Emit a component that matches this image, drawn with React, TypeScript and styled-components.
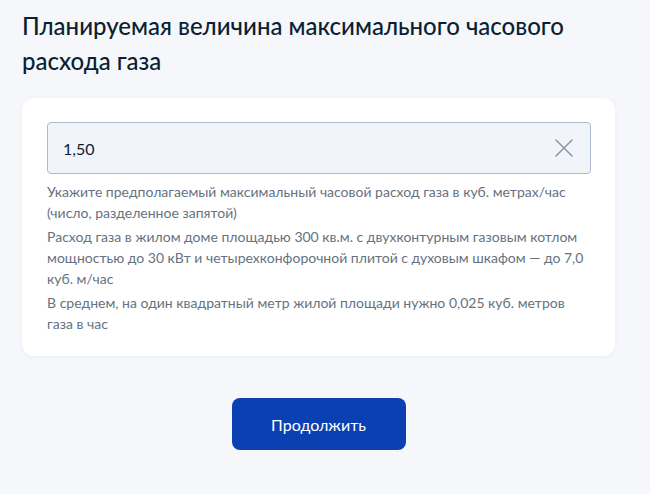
import React from 'react';
import styled, { createGlobalStyle } from 'styled-components';

const GlobalStyle = createGlobalStyle`
  html, body {
    margin: 0;
    padding: 0;
    background: #f5f7fa;
  }
  body {
    font-family: Lato, "Noto Sans", sans-serif;
    color: #0b1f33;
  }
`;

const Page = styled.div`
  padding: 8px 22px 0 22px;
  width: 593px;
`;

const Title = styled.h1`
  margin: 0;
  font-size: 24px;
  line-height: 35px;
  font-weight: 500;
  color: #0b1f33;
`;

const Card = styled.div`
  margin-top: 20px;
  background: #ffffff;
  border-radius: 12px;
  padding: 24px 24px 22px 25px;
  box-shadow: 0 1px 4px rgba(35, 65, 120, 0.06);
`;

const InputBox = styled.div`
  box-sizing: border-box;
  display: flex;
  align-items: center;
  height: 52px;
  border: 1.5px solid #adb9d0;
  border-radius: 4px;
  background: #f1f4f9;
  padding: 0 14px 0 15px;
`;

const Value = styled.input`
  flex: 1;
  border: none;
  outline: none;
  background: transparent;
  font-family: Lato, "Noto Sans", sans-serif;
  font-size: 16px;
  color: #0b1f33;
  padding: 0;
`;

const ClearButton = styled.button`
  border: none;
  background: transparent;
  padding: 0;
  width: 24px;
  height: 24px;
  display: flex;
  align-items: center;
  justify-content: center;
  cursor: pointer;
`;

const Hints = styled.div`
  margin-top: 7px;
  display: flex;
  flex-direction: column;
  gap: 3px;
`;

const Hint = styled.p`
  margin: 0;
  font-size: 14px;
  line-height: 21px;
  color: #66727f;
`;

const Actions = styled.div`
  display: flex;
  justify-content: center;
  margin-top: 42px;
`;

const PrimaryButton = styled.button`
  width: 174px;
  height: 52px;
  border: none;
  border-radius: 8px;
  background: #0b40b3;
  color: #ffffff;
  font-family: Lato, "Noto Sans", sans-serif;
  font-size: 16px;
  cursor: pointer;
`;

export default function App(): JSX.Element {
  return (
    <>
      <GlobalStyle />
      <Page>
        <Title>Планируемая величина максимального часового расхода газа</Title>
        <Card>
          <InputBox>
            <Value defaultValue="1,50" />
            <ClearButton aria-label="Очистить">
              <svg width="20" height="20" viewBox="0 0 20 20" fill="none">
                <path d="M2 2L18 18M18 2L2 18" stroke="#8a96a8" strokeWidth="1.5" strokeLinecap="round" />
              </svg>
            </ClearButton>
          </InputBox>
          <Hints>
            <Hint>Укажите предполагаемый максимальный часовой расход газа в куб. метрах/час (число, разделенное запятой)</Hint>
            <Hint>
              Расход газа в жилом доме площадью 300 кв.м. с двухконтурным газовым котлом мощностью до 30 кВт и
              четырехконфорочной плитой с духовым шкафом — до 7,0 куб. м/час
            </Hint>
            <Hint>В среднем, на один квадратный метр жилой площади нужно 0,025 куб. метров газа в час</Hint>
          </Hints>
        </Card>
        <Actions>
          <PrimaryButton>Продолжить</PrimaryButton>
        </Actions>
      </Page>
    </>
  );
}
